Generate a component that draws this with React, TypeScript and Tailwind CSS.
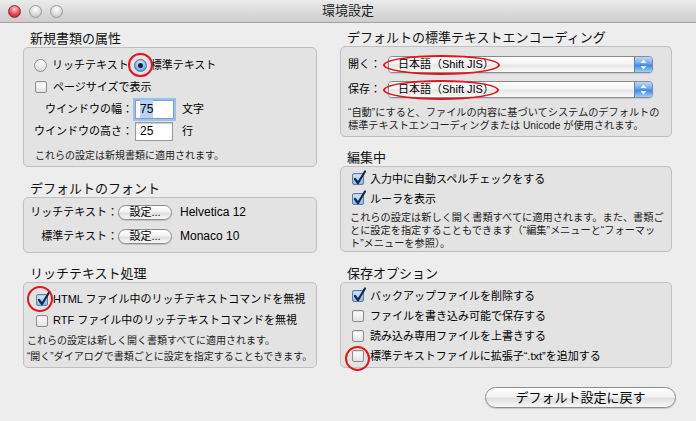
import type { ReactNode } from 'react';

const aquaButton =
  'bg-[linear-gradient(#ffffff,#f3f3f3_45%,#e0e0e0_55%,#f8f8f8)] border border-[#8d8d8d] shadow-[0_1px_1px_rgba(0,0,0,0.15)]';

function Checkbox({ checked = false }: { checked?: boolean }) {
  return (
    <span
      className={`relative inline-block w-[12px] h-[12px] shrink-0 rounded-[2px] border ${
        checked
          ? 'border-[#5b7eae] bg-gradient-to-b from-[#d8e9fb] to-[#86b8ee]'
          : 'border-[#8e8e8e] bg-gradient-to-b from-white to-[#e2e2e2]'
      } shadow-[inset_0_1px_1px_rgba(0,0,0,0.12)]`}
    >
      {checked && (
        <svg className="absolute -top-[4px] left-[0px] overflow-visible" width="13" height="15" viewBox="0 0 13 15">
          <path d="M2 9 L5 13 L12 1.5" stroke="#17264a" strokeWidth="2.2" fill="none" strokeLinecap="round" strokeLinejoin="round" />
        </svg>
      )}
    </span>
  );
}

function Radio({ checked = false }: { checked?: boolean }) {
  if (checked) {
    return (
      <span className="w-[13px] h-[13px] shrink-0 rounded-full border border-[#4d6e9e] bg-[radial-gradient(circle_at_50%_35%,#eaf4ff,#74abea_65%,#3d7ccc)] flex items-center justify-center">
        <span className="w-[5px] h-[5px] rounded-full bg-[#0f1f3a]" />
      </span>
    );
  }
  return <span className="w-[13px] h-[13px] shrink-0 rounded-full border border-[#8e8e8e] bg-gradient-to-b from-white to-[#d9d9d9]" />;
}

function Group({ title, box, className, children }: { title: string; box: string; className?: string; children: ReactNode }) {
  return (
    <div className={className}>
      <div className="h-[17px] leading-[17px] text-[13px] pl-[7px] text-[#111] whitespace-nowrap">{title}</div>
      <div className={`rounded-[5px] border border-[#c0c0c0] bg-[#e3e3e3] ${box}`}>{children}</div>
    </div>
  );
}

function Popup({ label }: { label: string }) {
  return (
    <div className="flex items-center h-[25px]">
      <span className="w-[40px] text-[11px]">{label}</span>
      <div className="flex h-[17px] w-[265px] rounded-[4px] border border-[#8a8a8a] overflow-hidden shadow-[0_1px_1px_rgba(0,0,0,0.12)]">
        <div className="flex-1 flex items-center pl-[9px] text-[11px] bg-[linear-gradient(#ffffff,#f4f4f4_45%,#e6e6e6_55%,#fbfbfb)]">
          日本語（Shift JIS）
        </div>
        <div className="w-[18px] border-l border-[#5a86c0] flex items-center justify-center bg-[linear-gradient(#b9d9fb,#6aa6ec_45%,#3f88e3_55%,#9fd0fb)]">
          <svg width="7" height="11" viewBox="0 0 7 11">
            <path d="M3.5 0.5 L6.5 4 H0.5 Z" fill="#fff" />
            <path d="M3.5 10.5 L6.5 7 H0.5 Z" fill="#fff" />
          </svg>
        </div>
      </div>
    </div>
  );
}

function CheckRow({ checked, children }: { checked?: boolean; children: ReactNode }) {
  return (
    <div className="flex items-center h-[20px] gap-[6px]">
      <Checkbox checked={checked} />
      <span className="text-[11px] whitespace-nowrap">{children}</span>
    </div>
  );
}

function Light({ red }: { red?: boolean }) {
  return (
    <span
      className={`w-[13px] h-[13px] rounded-full border ${
        red
          ? 'border-[#9a2b2b] bg-[radial-gradient(circle_at_50%_30%,#ffd4d4,#e5484d_55%,#a8161c)]'
          : 'border-[#9c9c9c] bg-[radial-gradient(circle_at_50%_30%,#ffffff,#dcdcdc_55%,#b4b4b4)]'
      }`}
    />
  );
}

export default function App() {
  return (
    <div className="relative w-[696px] h-[421px] overflow-hidden bg-[#ededed] text-black font-['Liberation_Sans','Noto_Sans_CJK_JP',sans-serif]">
      {/* title bar */}
      <div className="h-[23px] grid grid-cols-[1fr_auto_1fr] items-center border-b border-[#a3a3a3] bg-gradient-to-b from-[#ebebeb] to-[#cdcdcd]">
        <div className="flex items-center gap-[8px] pl-[8px]">
          <Light red />
          <Light />
          <Light />
        </div>
        <div className="text-[13px] text-[#222]">環境設定</div>
        <div />
      </div>

      <div className="flex pl-[23px] gap-[23px] items-start">
        {/* left column */}
        <div className="w-[294px] pt-[7px] flex flex-col">
          <Group title="新規書類の属性" box="h-[120px] pt-[6px] pl-[10px]">
            <div className="flex items-center h-[22px] text-[11px]">
              <Radio />
              <span className="ml-[5px]">リッチテキスト</span>
              <span className="ml-[5px]">
                <Radio checked />
              </span>
              <span className="ml-[4px]">標準テキスト</span>
            </div>
            <div className="flex items-center h-[22px] gap-[6px] pl-[1px]">
              <Checkbox />
              <span className="text-[11px]">ページサイズで表示</span>
            </div>
            <div className="flex items-center h-[22px] text-[11px]">
              <span className="w-[99px] text-right whitespace-nowrap">ウインドウの幅：</span>
              <div className="ml-[2px] w-[39px] h-[19px] bg-white border border-[#7f9fcf] ring-[2px] ring-[#9cc0ee] flex items-center pl-[4px] text-[12px]">
                <span className="bg-[#b6d2f6]">75</span>
              </div>
              <span className="ml-[8px]">文字</span>
            </div>
            <div className="flex items-center h-[22px] text-[11px]">
              <span className="w-[99px] text-right whitespace-nowrap">ウインドウの高さ：</span>
              <div className="ml-[2px] w-[38px] h-[19px] bg-white border border-[#9a9a9a] shadow-[inset_0_1px_1px_rgba(0,0,0,0.2)] flex items-center pl-[4px] text-[12px]">
                25
              </div>
              <span className="ml-[9px]">行</span>
            </div>
            <div className="mt-[7px] h-[14px] leading-[14px] text-[10px] pl-[1px] text-[#222]">
              これらの設定は新規書類に適用されます。
            </div>
          </Group>

          <Group title="デフォルトのフォント" className="mt-[13px]" box="h-[56px] pt-[2px] pl-[6px]">
            {[
              ['リッチテキスト：', 'Helvetica 12'],
              ['標準テキスト：', 'Monaco 10'],
            ].map(([label, font]) => (
              <div key={label} className="flex items-center h-[24px] text-[11px]">
                <span className="w-[88px] text-right whitespace-nowrap">{label}</span>
                <span className={`w-[54px] h-[15px] rounded-full flex items-center justify-center text-[11px] ${aquaButton}`}>
                  設定...
                </span>
                <span className="ml-[8px] text-[12px]">{font}</span>
              </div>
            ))}
          </Group>

          <Group title="リッチテキスト処理" className="mt-[12px]" box="h-[86px] pt-[6px] pl-[12px]">
            <div className="flex items-center h-[21px] gap-[5px]">
              <Checkbox checked />
              <span className="text-[11px] whitespace-nowrap">HTML ファイル中のリッチテキストコマンドを無視</span>
            </div>
            <div className="flex items-center h-[21px] gap-[5px]">
              <Checkbox />
              <span className="text-[11px] whitespace-nowrap">RTF ファイル中のリッチテキストコマンドを無視</span>
            </div>
            <div className="mt-[2px] -ml-[9px] text-[10px] leading-[16px] whitespace-nowrap text-[#222]">
              <div>これらの設定は新しく開く書類すべてに適用されます。</div>
              <div>“開く”ダイアログで書類ごとに設定を指定することもできます。</div>
            </div>
          </Group>
        </div>

        {/* right column */}
        <div className="w-[332px] pt-[6px] flex flex-col">
          <Group title="デフォルトの標準テキストエンコーディング" box="h-[91px] pt-[5px] pl-[7px]">
            <Popup label="開く：" />
            <Popup label="保存：" />
            <div className="mt-[4px] text-[10.2px] leading-[13px] whitespace-nowrap text-[#222]">
              <div>“自動”にすると、ファイルの内容に基づいてシステムのデフォルトの</div>
              <div>標準テキストエンコーディングまたは Unicode が使用されます。</div>
            </div>
          </Group>

          <Group title="編集中" className="mt-[12px]" box="h-[86px] pt-[2px] pl-[11px]">
            <CheckRow checked>入力中に自動スペルチェックをする</CheckRow>
            <CheckRow checked>ルーラを表示</CheckRow>
            <div className="mt-[2px] -ml-[2px] text-[10.2px] leading-[13px] whitespace-nowrap text-[#222]">
              <div>これらの設定は新しく開く書類すべてに適用されます。また、書類ご</div>
              <div>とに設定を指定することもできます（“編集”メニューと“フォーマッ</div>
              <div>ト”メニューを参照）。</div>
            </div>
          </Group>

          <Group title="保存オプション" className="mt-[13px]" box="h-[86px] pt-[3px] pl-[11px]">
            <CheckRow checked>バックアップファイルを削除する</CheckRow>
            <CheckRow>ファイルを書き込み可能で保存する</CheckRow>
            <CheckRow>読み込み専用ファイルを上書きする</CheckRow>
            <CheckRow>標準テキストファイルに拡張子“.txt”を追加する</CheckRow>
          </Group>
        </div>
      </div>

      <div className="flex justify-end pr-[20px] mt-[19px]">
        <span className={`w-[191px] h-[21px] rounded-full flex items-center justify-center text-[13px] ${aquaButton}`}>
          デフォルト設定に戻す
        </span>
      </div>

      {/* red annotation marks */}
      <span className="absolute left-[128px] top-[53px] w-[25px] h-[24px] rounded-full border-[2.5px] border-[#e5141b]" />
      <span className="absolute left-[27px] top-[286px] w-[26px] h-[26px] rounded-full border-[2.5px] border-[#e5141b]" />
      <span className="absolute left-[345px] top-[346px] w-[25px] h-[25px] rounded-full border-[2.5px] border-[#e5141b]" />
      <span className="absolute left-[383px] top-[55px] w-[117px] h-[20px] rounded-[50%] border-[2.5px] border-[#e5141b]" />
      <span className="absolute left-[383px] top-[80px] w-[116px] h-[20px] rounded-[50%] border-[2.5px] border-[#e5141b]" />
    </div>
  );
}
